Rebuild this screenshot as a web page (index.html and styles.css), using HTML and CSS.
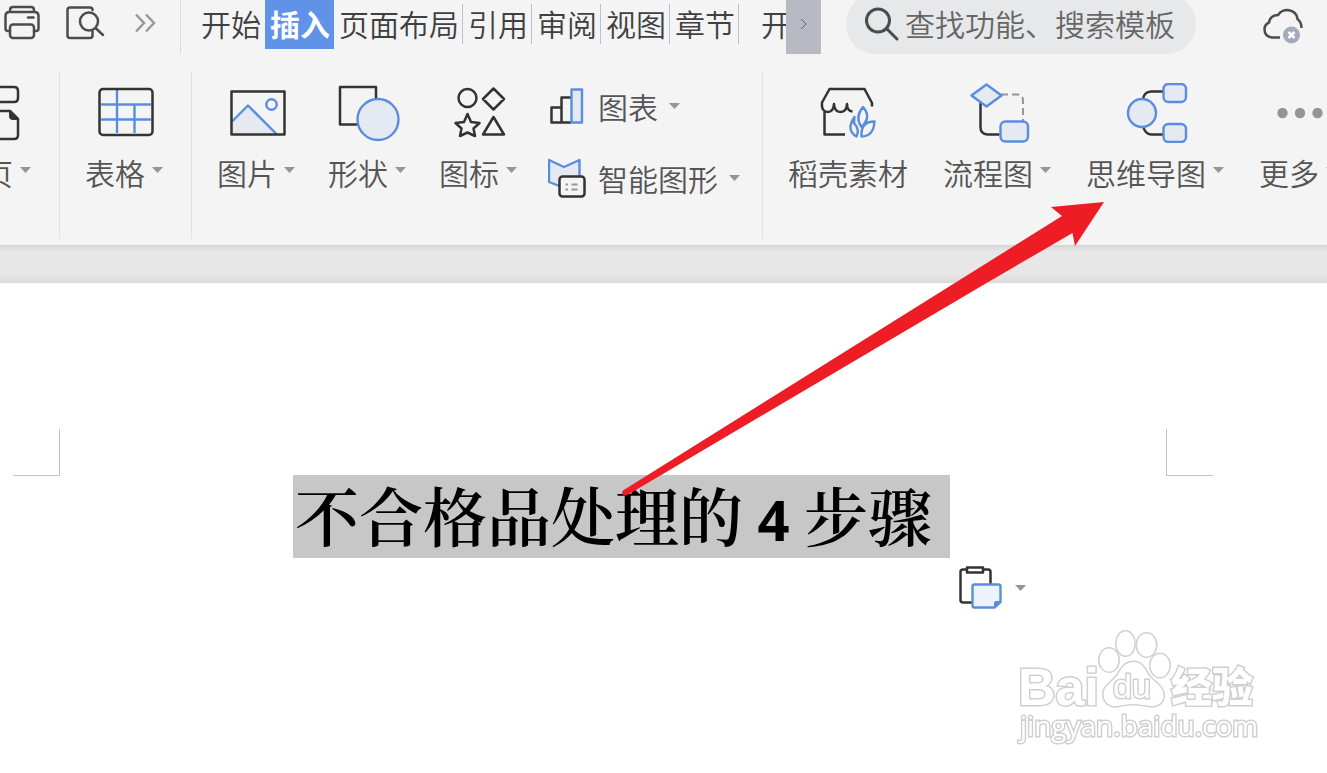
FILE: index.html
```html
<!DOCTYPE html>
<html lang="zh-CN">
<head>
<meta charset="utf-8">
<title>文字文稿</title>
<link rel="stylesheet" href="styles.css">
</head>
<body>
<header class="topbar">
  <div class="quick">
    <button class="quick-btn" aria-label="打印">
      <svg class="ico-quick" viewBox="2 2 40 42"><g class="mid"><path d="M10 12V10q0-3 3-3h18q3 0 3 3v2M10 31H8q-2.500 0-2.500-2.500V16q0-4 4-4h25q4 0 4 4v12.500q0 2.500-2.500 2.500h-2"/><rect x="10" y="24.500" width="24" height="13.500" rx="3"/><path d="M28 17.500h5.500"/></g></svg>
    </button>
    <button class="quick-btn" aria-label="打印预览">
      <svg class="ico-quick" viewBox="66 2 40 42"><g class="mid"><path d="M92.500 10q0-2.500-2.500-2.500H70q-2.500 0-2.500 2.500v25.500q0 2.500 2.500 2.500h20q2.500 0 2.500-2.500v-5"/><circle cx="89" cy="21.500" r="9"/><path d="M95.500 28l7.500 7"/></g></svg>
    </button>
    <button class="quick-btn" aria-label="更多快捷命令">
      <svg class="ico-more" viewBox="130 8 24 30"><path class="chev" d="M133 14.500l8 8.500-8 8.500M143 14.500l8 8.500-8 8.500"/></svg>
    </button>
  </div>
  <nav class="tabs">
    <button class="tab">开始</button>
    <button class="tab active">插入</button>
    <button class="tab">页面布局</button>
    <button class="tab">引用</button>
    <button class="tab">审阅</button>
    <button class="tab">视图</button>
    <button class="tab">章节</button>
    <button class="tab cut">开</button>
  </nav>
  <button class="scroll" aria-label="向右滚动">
    <svg class="ico-scroll" viewBox="0 0 10 14"><path d="M2 2l5 5-5 5"/></svg>
  </button>
  <label class="search">
    <svg class="ico-search" viewBox="864 6 38 38"><g class="mid big"><circle cx="878" cy="21.500" r="11.500"/><path d="M887 30l10 10"/></g></svg>
    <input class="search-input" type="text" placeholder="查找功能、搜索模板" aria-label="查找功能、搜索模板">
  </label>
  <button class="cloud" aria-label="云同步">
    <svg class="ico-cloud" viewBox="1262 6 42 40"><path class="cloudline" d="M1280 37.500h-8q-7.500-1-7.500-8 0-5 4.500-7 1-7 9-7.500 3-5 10-5 9 1.500 9.500 9 4 3 4 9"/><circle cx="1291.500" cy="35" r="8.500" fill="#a2abb9"/><path d="M1288.500 32l6 6M1294.500 32l-6 6" stroke="#fff" stroke-width="2.500"/></svg>
  </button>
</header>

<section class="ribbon">
  <div class="group first">
    <button class="tool">
      <svg class="ico" viewBox="-42 83 68 60"><g class="dark"><path d="M-10 87H14q4 0 4 4v7q0 4-4 4H-10M-10 111H10l8 8v16q0 4-4 4H-10"/></g><path d="M9 110v6q0 4 4 4h6z" fill="#333"/></svg>
      <span class="label">页<i class="caret"></i></span>
    </button>
  </div>
  <div class="group">
    <button class="tool">
      <svg class="ico" viewBox="90 83 68 60"><g class="blue"><path d="M101 104.500h50M101 119.500h50M117 90v43M134.500 104v29"/></g><rect class="dark" x="99.500" y="89" width="53" height="46" rx="3.500"/></svg>
      <span class="label">表格<i class="caret"></i></span>
    </button>
  </div>
  <div class="group">
    <button class="tool">
      <svg class="ico" viewBox="222 83 68 60"><path d="M232 122l16-16.500 28 28.500h-44z" fill="#e4e9f2"/><g class="blue"><path d="M232 121.500l16-16 28.500 28.500"/><circle cx="271.500" cy="104.500" r="5.200"/></g><rect class="dark" x="231.500" y="91.500" width="53" height="43"/></svg>
      <span class="label">图片<i class="caret"></i></span>
    </button>
    <button class="tool">
      <svg class="ico" viewBox="333 83 68 60"><rect class="dark" x="340" y="87" width="36" height="37.500"/><circle class="blue tint" cx="378" cy="119.500" r="20.500"/></svg>
      <span class="label">形状<i class="caret"></i></span>
    </button>
    <button class="tool">
      <svg class="ico" viewBox="444 83 68 60"><g class="dark"><circle cx="467.500" cy="98" r="9"/><path d="M493.500 88.500l10.500 10.500-10.500 10.500-10.500-10.500zM467.500 114l3.500 8 8.500 1-6 5.500 1.500 7.500-7.500-3.500-7.500 3.500 1.500-7.500-6-5.500 8.500-1zM493.500 117l10.500 17.500h-21z"/></g></svg>
      <span class="label">图标<i class="caret"></i></span>
    </button>
    <div class="stack">
      <button class="row">
        <svg class="ico-row" viewBox="548 86 38 40"><g class="dark"><path d="M561.500 122.500h-10v-15h10M571 122.500h-9.500V97.500h9.500"/></g><rect class="blue tint" x="571.500" y="89.500" width="10.500" height="33"/></svg>
        <span class="label low">图表<i class="caret"></i></span>
      </button>
      <button class="row">
        <svg class="ico-row" viewBox="548 158 38 40"><path class="blue tint" d="M549 160l15 7 15.500-7v26h-20l-10.500-4z"/><rect class="dark paper" x="559.500" y="176.500" width="25" height="20" rx="3"/><path d="M565.500 184.500h2.500M571.500 184.500h6M565.500 189.500h2.500M571.500 189.500h6" stroke="#959595" stroke-width="2"/></svg>
        <span class="label low">智能图形<i class="caret"></i></span>
      </button>
    </div>
  </div>
  <div class="group last">
    <button class="tool">
      <svg class="ico" viewBox="814 83 68 60"><g class="dark"><path d="M824.500 112v22.500H845M872 106.500V103l-7.500-14H829.500L822 102.500q-1 9 5.500 9.500 6 0 6.500-8 .5 8 6.500 8t6.500-8q0 7 5.500 7.500"/></g><g class="blue"><path d="M863 107q9 10-1.500 20-7-10 1.500-20zM854.500 117q-9 13 2 19.500 3.500-7-2.500-13.500zM874.500 121.500q-14 0-13 15 12 0 13-15z"/></g></svg>
      <span class="label">稻壳素材</span>
    </button>
    <button class="tool">
      <svg class="ico" viewBox="964 83 68 60"><path class="dark" d="M981.500 103v24q0 7 7 7.500h12"/><path class="dash" d="M1002 94.500h16q6 0 6 6V121"/><path class="blue tint" d="M987.500 84.500l15 11-15 11-15-11z"/><rect class="blue tint" x="1001.500" y="121.500" width="27.500" height="20" rx="5"/></svg>
      <span class="label">流程图<i class="caret"></i></span>
    </button>
    <button class="tool">
      <svg class="ico" viewBox="1120 83 68 60"><path class="dark" d="M1142 99q1-7 8-7.500h12M1142 126q2 8 8 8.500h12"/><circle class="blue tint" cx="1141" cy="113" r="14"/><rect class="blue tint" x="1162.500" y="84" width="22.500" height="18" rx="5"/><rect class="blue tint" x="1162.500" y="124" width="22.500" height="18" rx="5"/></svg>
      <span class="label">思维导图<i class="caret"></i></span>
    </button>
    <button class="tool">
      <svg class="ico" viewBox="1261 83 68 60"><g fill="#959595"><circle cx="1279.500" cy="113" r="5.200"/><circle cx="1297" cy="113" r="5.200"/><circle cx="1314.500" cy="113" r="5.200"/></g></svg>
      <span class="label">更多<i class="caret"></i></span>
    </button>
  </div>
</section>

<div class="gutter"></div>

<main class="page">
  <div class="margins"><span class="corner left"></span><span class="corner right"></span></div>
  <div class="title-row">
    <div class="title-box">
      <h1 class="title">不合格品处理的<span class="digit"> 4 </span>步骤</h1>
      <button class="paste" aria-label="粘贴选项">
        <svg class="ico-paste" viewBox="959 565 46 46"><g class="dark"><path d="M968 569.500h-4q-2.500 0-2.500 2.500v28q0 2.500 2.500 2.500h10M984 569.500h5q2.500 0 2.500 2.500v13"/><rect x="968" y="567.500" width="16" height="5"/></g><path class="blue note" d="M975.500 584.500h24q2 0 2 2V602l-6 5.500h-20q-2 0-2-2v-19q0-2 2-2z"/><path d="M1002 601l-7 7v-5q0-2 2-2z" fill="#5a8dde"/></svg>
        <i class="caret"></i>
      </button>
    </div>
  </div>
  <svg class="watermark" viewBox="1010 622 250 126" role="img" aria-label="Baidu 经验">
    <g class="halo">
      <text class="wm-bai" x="1018" y="705">Bai</text>
      <ellipse cx="1109" cy="660" rx="9.500" ry="11.500"/>
      <ellipse cx="1125.500" cy="643.500" rx="9" ry="12"/>
      <ellipse cx="1146.500" cy="645" rx="9.500" ry="11.500"/>
      <ellipse cx="1160" cy="665.500" rx="9.500" ry="11.500"/>
      <path d="M1133.500 662c8 0 11 6 15 13 5 7 15 11 15 20 0 8-6 12-14 11-6-1-10-2-16-2s-10 1-16 2c-8 1-14-4-14-12 0-8 9-12 14-19 5-8 8-13 16-13z"/>
      <text class="wm-du" x="1113" y="698">du</text>
      <text class="wm-cn" x="1171" y="702">经验</text>
      <text class="wm-url" x="1020" y="736">jingyan.baidu.com</text>
    </g>
  </svg>
</main>

<svg class="arrow" viewBox="615 195 495 305" aria-hidden="true"><path d="M1104 202l-53 5 11 9L990 261 623 490.500q-3 5 3.500 5L990 281l82.500-48 2.500 13z" fill="#ee1c25"/></svg>
</body>
</html>
```

FILE: styles.css
```css
* { box-sizing: border-box; }

body {
  margin: 0;
  min-height: 100vh;
  display: flex;
  flex-direction: column;
  position: relative;
  overflow: hidden;
  background: #fff;
  color: #404040;
  font-family: "Noto Sans CJK SC", sans-serif;
  font-size: 30px;
  font-weight: 350;
}

button {
  flex: none;
  margin: 0;
  padding: 0;
  border: 0;
  background: none;
  color: inherit;
  font: inherit;
}

svg { display: block; flex: none; fill: none; }

.dark { stroke: #333; stroke-width: 2.5; stroke-linejoin: round; fill: none; }
.mid { stroke: #4c4c4c; stroke-width: 2.5; stroke-linecap: round; }
.mid.big { stroke-width: 3; }
.blue { stroke: #5a8dde; stroke-width: 2.4; stroke-linejoin: round; fill: none; }
.tint { fill: #e4e9f2; }
.note { fill: #edf3fb; }
.paper { fill: #f4f4f4; }
.dash { stroke: #959595; stroke-width: 2; stroke-dasharray: 7 4; }
.chev { stroke: #9a9a9a; stroke-width: 2.5; }
.cloudline { stroke: #4c4c4c; stroke-width: 2.5; }

/* Top bar */
.topbar {
  display: flex;
  align-items: flex-start;
  height: 54px;
  padding-right: 23px;
  background: #f4f4f4;
}

.quick {
  display: flex;
  align-items: center;
  flex: none;
  gap: 24px;
  width: 181px;
  height: 54px;
  padding: 0 0 8px 2px;
  border-right: 1px solid #dcdcdc;
}

.ico-quick { width: 40px; height: 42px; }
.ico-more { width: 24px; height: 30px; margin-left: 3px; }

.tabs {
  display: flex;
  align-items: flex-start;
  flex: none;
  width: 605px;
  padding-left: 15px;
  overflow: hidden;
}

.tab {
  position: relative;
  height: 49px;
  padding: 0 4px 0 5px;
  line-height: 46px;
  white-space: nowrap;
  display: flex;
}

.tab::after {
  content: "";
  position: absolute;
  top: 4px;
  right: 0;
  width: 1px;
  height: 40px;
  background: #b9c3d0;
}

.tab:first-child::after, .tab.active::after, .tab.cut::after { display: none; }
.tab.active { background: #6092e8; color: #fff; font-weight: 700; }
.tab.cut { margin-left: 17px; }

.scroll {
  display: flex;
  align-items: center;
  justify-content: center;
  width: 35px;
  height: 54px;
  padding-bottom: 6px;
  background: #b7bac3;
}

.ico-scroll { width: 10px; height: 14px; stroke: #666; }

.search {
  display: flex;
  align-items: center;
  flex: 0 1 350px;
  min-width: 0;
  height: 60px;
  margin: -6px 0 0 25px;
  padding: 0 16px 0 18px;
  border-radius: 30px;
  background: #e6e8ea;
}

.ico-search { width: 38px; height: 38px; }

.search-input {
  flex: 1;
  min-width: 0;
  width: 0;
  height: 44px;
  margin-left: 3px;
  padding: 0 0 3px;
  border: 0;
  outline: 0;
  background: none;
  font: inherit;
}

.search-input::placeholder { color: #666; opacity: 1; }
.cloud { margin: 6px 0 0 auto; }
.ico-cloud { width: 42px; height: 40px; }

/* Ribbon */
.ribbon {
  display: flex;
  flex: none;
  padding: 17px 0 6px;
  background: #f4f4f4;
  color: #555;
}

.group {
  display: flex;
  align-items: flex-start;
  flex: none;
  gap: 33px;
  height: 168px;
  padding: 12px 28px 0 25px;
  border-right: 1px solid #e1e1e1;
}

.group:nth-child(3) { padding-right: 22px; }

.group.first {
  width: 60px;
  padding-left: 0;
  justify-content: flex-end;
}

.group.last { gap: 35px; border-right: 0; }

.tool {
  display: flex;
  flex-direction: column;
  align-items: center;
  gap: 12px;
}

.group.first .tool { align-items: flex-end; }
.group.first .ico { margin-right: 5px; }
.ico { width: 68px; height: 60px; }

.label {
  display: flex;
  align-items: center;
  gap: 7px;
  line-height: 34px;
  white-space: nowrap;
}

.label .caret { margin-bottom: 4px; }
.label.low { gap: 11px; line-height: 40px; }
.label.low .caret { margin-bottom: 0; }

.caret {
  flex: none;
  width: 11px;
  height: 6px;
  background: #959595;
  clip-path: polygon(0 0, 100% 0, 50% 100%);
}

.stack {
  display: flex;
  flex-direction: column;
  gap: 32px;
  margin: 3px 0 0 -2px;
}

.row {
  display: flex;
  align-items: center;
  gap: 12px;
}

.ico-row { width: 38px; height: 40px; }

.gutter {
  flex: none;
  height: 38px;
  background: linear-gradient(#d4d4d4, #e7e7e7 6px, #e7e7e7 28px, #dadada);
}

/* Document */
.page {
  position: relative;
  flex: 1;
  min-height: 490px;
  padding-top: 146px;
  background: #fff;
}

.margins {
  display: flex;
  justify-content: space-between;
  padding: 0 114px 0 13px;
}

.corner {
  width: 47px;
  height: 47px;
  border-bottom: 1px solid #c4c4c4;
}

.corner.left { border-right: 1px solid #c4c4c4; }
.corner.right { border-left: 1px solid #c4c4c4; }

.title-row {
  display: flex;
  justify-content: center;
  margin-top: -1px;
  padding-right: 84px;
}

.title-box { position: relative; }

.title {
  margin: 0;
  padding: 0 18px 6px 2px;
  background: #c7c7c7;
  color: #000;
  font-family: "Noto Serif CJK SC", "Noto Sans CJK SC", serif;
  font-size: 64px;
  font-weight: 600;
  line-height: 77px;
  white-space: nowrap;
}

.digit {
  font-family: "Open Sans", sans-serif;
  font-size: 56px;
  font-weight: 700;
  line-height: 1;
  white-space: pre;
}

.paste {
  position: absolute;
  top: 90px;
  left: calc(100% + 8px);
  display: flex;
  align-items: center;
  gap: 11px;
}

.ico-paste { width: 46px; height: 46px; }

.watermark {
  position: absolute;
  right: 67px;
  bottom: 25px;
  width: 250px;
  height: 126px;
}

.halo {
  fill: #fff;
  stroke: #d0d0d0;
  stroke-width: 3;
  paint-order: stroke;
  filter: blur(0.6px);
}

.wm-bai { font: 700 52px "Liberation Sans", sans-serif; }
.wm-du { font: 400 34px "Liberation Sans", sans-serif; }
.wm-cn { font: 900 41px "Noto Sans CJK SC", sans-serif; }
.wm-url { font: 400 28px "Open Sans", sans-serif; }

.arrow {
  position: absolute;
  top: 195px;
  left: 615px;
  width: 495px;
  height: 305px;
  pointer-events: none;
}
```
